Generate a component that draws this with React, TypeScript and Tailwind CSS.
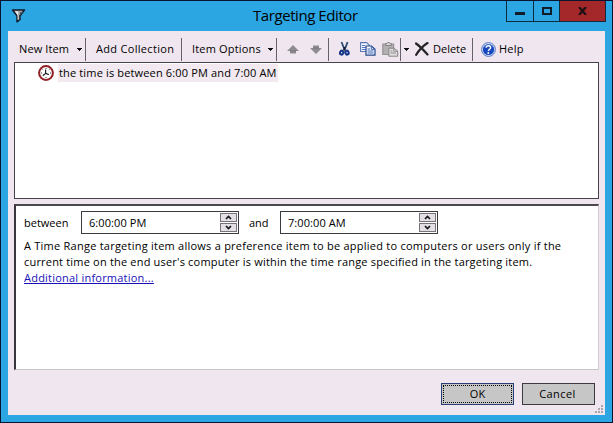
import type { ReactNode } from "react";

function Divider() {
  return <span className="h-[23px] w-px shrink-0 bg-[#66626c]" />;
}

function Caret() {
  return (
    <svg width="6" height="3" viewBox="0 0 6 3" className="shrink-0" shapeRendering="crispEdges">
      <path d="M0 0h6L3 3z" fill="#111" />
    </svg>
  );
}

function FilterIcon() {
  return (
    <svg width="16" height="14" viewBox="0 0 16 14">
      <path d="M1.5 1h12L9 6.8v3.7L6 12.8v-6z" fill="#a8a9ad" stroke="#121e2b" strokeWidth="1.5" strokeLinejoin="round" />
      <path d="M4 2.2h3l.5 8-.8.5V6.5z" fill="#e9e9e9" />
      <path d="M9 3h3L8.5 6.5z" fill="#555b63" />
    </svg>
  );
}

function ArrowIcon({ down = false }: { down?: boolean }) {
  return (
    <svg width="12" height="9" viewBox="0 0 12 9" className={down ? "shrink-0 rotate-180" : "shrink-0"}>
      <path d="M6 0l6 6H9v2.5H3V6H0z" fill="#8e8c91" />
      <path d="M3 6h6" stroke="#77757a" />
    </svg>
  );
}

function ScissorsIcon() {
  return (
    <svg width="11" height="14" viewBox="0 0 11 14" className="shrink-0">
      <path d="M2.5 0l2 5 1.6 3M8.6 0L6.7 5 4.6 8" fill="none" stroke="#254874" strokeWidth="1.7" />
      <path d="M5.5 5v3.5" stroke="#101a31" strokeWidth="2" />
      <ellipse cx="2.7" cy="10.6" rx="1.6" ry="2" fill="none" stroke="#123489" strokeWidth="2" transform="rotate(25 2.7 10.6)" />
      <ellipse cx="8" cy="10.6" rx="1.6" ry="2" fill="none" stroke="#123489" strokeWidth="2" transform="rotate(-25 8 10.6)" />
    </svg>
  );
}

function CopyIcon() {
  return (
    <svg width="16" height="14" viewBox="0 0 16 14" className="shrink-0">
      <path d="M.6.6h6l2.8 2.7v6.2H.6z" fill="#f4f7ff" stroke="#5b78b4" strokeWidth="1.1" />
      <path d="M2 3.5h3M2 5.5h4M2 7.5h4" stroke="#5379c2" />
      <path d="M6 4h5.5L15 7.2v5.9H6z" fill="#f8faff" stroke="#24468d" strokeWidth="1.2" />
      <path d="M11.3 4v3.3H15M7.5 7h2.5M7.5 9h6M7.5 11h6" fill="none" stroke="#3b62b3" />
    </svg>
  );
}

function PasteIcon() {
  return (
    <svg width="17" height="15" viewBox="0 0 17 15" className="shrink-0">
      <path d="M.8 2h10.8v10.5H.8z" fill="#b2b0b1" stroke="#949294" strokeWidth="1.2" />
      <path d="M3.5 3.5V1.7H5L5.5.6h2L8 1.7h1.5v1.8z" fill="#dedcda" stroke="#858385" />
      <path d="M6.8 6.2h5L15.7 9v5.2H6.8z" fill="#e2dfdf" stroke="#858385" />
      <path d="M11.8 6v3.2h4M8.3 9h2M8.3 11h5.8" fill="none" stroke="#918f91" />
    </svg>
  );
}

function DeleteIcon() {
  return (
    <svg width="14" height="14" viewBox="0 0 14 14" className="shrink-0">
      <path d="M1 1.5c3 2 7.5 6.5 11.5 11M12.5 1C8.5 3.5 4 8 1.2 12.8" fill="none" stroke="#242326" strokeWidth="2.2" strokeLinecap="round" />
    </svg>
  );
}

function HelpIcon() {
  return (
    <svg width="15" height="15" viewBox="0 0 15 15" className="shrink-0">
      <circle cx="7.5" cy="7.5" r="6.9" fill="#d8e3f8" stroke="#5375bd" />
      <circle cx="7.5" cy="7.5" r="5.6" fill="#1646bd" />
      <path d="M3.3 5C5 2.2 9.2 1.8 11.5 4.4" fill="none" stroke="#5a85dd" />
      <path d="M5.2 5.8c.2-2.8 4.6-2.5 4.4-.1C9.5 7.3 7.6 7.2 7.4 9" fill="none" stroke="#fff" strokeWidth="1.5" />
      <circle cx="7.3" cy="11" r=".95" fill="#fff" />
    </svg>
  );
}

function ClockIcon() {
  return (
    <svg width="16" height="16" viewBox="0 0 16 16" className="shrink-0">
      <circle cx="8" cy="8" r="6.9" fill="#fff" stroke="#8f1f24" strokeWidth="2" />
      <path d="M8 3v1M8 12v1M3 8h1M12 8h1M4.5 4.5l.6.6M11.5 4.5l-.6.6" stroke="#333" />
      <path d="M7.6 4.5v4l-2.8 2.3M7.6 8.3l3.2 1.3" fill="none" stroke="#202020" strokeWidth="1.2" />
    </svg>
  );
}

function SpinButton({ down = false }: { down?: boolean }) {
  return (
    <span className="flex h-[9px] w-[17px] items-center justify-center border border-[#77737b] bg-[#e3dfe4]">
      <svg width="7" height="5" viewBox="0 0 7 5" className={down ? "rotate-180" : ""}>
        <path d="M1 4l2.5-2.5L6 4" fill="none" stroke="#151515" strokeWidth="1.7" />
      </svg>
    </span>
  );
}

function TimeField({ children }: { children: ReactNode }) {
  return (
    <div className="flex h-[23px] w-[158px] shrink-0 items-center justify-between border border-[#3c3a40] bg-white pr-px pl-[7px] tracking-[0.08px]">
      {children}
      <div className="flex flex-col gap-px">
        <SpinButton />
        <SpinButton down />
      </div>
    </div>
  );
}

export default function App() {
  return (
    <div className="flex h-[423px] w-[613px] flex-col overflow-hidden border border-[#0a1430] bg-[#2ba6e3] font-['Open_Sans','Noto_Sans',sans-serif] text-[11px] leading-4 whitespace-nowrap text-black">
      <header className="flex h-[30px] shrink-0 items-start pl-[10px]">
        <div className="mt-[8px] w-[242px]"><FilterIcon /></div>
        <h1 className="mt-[4px] w-[253px] text-[15px] leading-5 tracking-[-0.43px]">Targeting Editor</h1>
        <div className="flex h-[21px] border border-t-0 border-[#112b3d]">
          <button className="flex w-[27px] items-center justify-center border-r border-[#112b3d]"><span className="mt-[5px] h-[3px] w-[10px] bg-[#101c28]" /></button>
          <button className="flex w-[26px] items-center justify-center border-r border-[#112b3d]"><span className="h-[8px] w-[10px] border-2 border-[#101c28]" /></button>
          <button className="flex w-[45px] items-center justify-center bg-[#a4272a]"><svg width="9" height="8" viewBox="0 0 9 8"><path d="M1 0l7 8M8 0L1 8" stroke="#1c1114" strokeWidth="2.2" /></svg></button>
        </div>
      </header>

      <main className="ml-[7px] flex h-[384px] w-[597px] shrink-0 flex-col bg-[#f0e6ef] pl-[6px]">
        <nav className="flex h-[31px] shrink-0 items-center pt-[5px]">
          <div className="flex w-[71px] items-center pl-[5px]"><span className="w-[57px] tracking-[0.1px]">New Item</span><Caret /></div>
          <Divider />
          <div className="w-[95px] pl-[10px] tracking-[0.31px]">Add Collection</div>
          <Divider />
          <div className="flex w-[94px] items-center pl-[10px]"><span className="w-[75px] tracking-[0.17px]">Item Options</span><Caret /></div>
          <Divider />
          <div className="flex w-[51px] items-center gap-[11px] pl-[10px]"><ArrowIcon /><ArrowIcon down /></div>
          <Divider />
          <div className="flex w-[71px] items-center pl-[10px]"><ScissorsIcon /><span className="w-[10px]" /><CopyIcon /><span className="w-[6px]" /><PasteIcon /></div>
          <Divider />
          <div className="flex w-[71px] items-center pl-[2px]"><Caret /><span className="w-[6px]" /><DeleteIcon /><span className="pl-[4px]">Delete</span></div>
          <Divider />
          <div className="flex items-center gap-[3px] pl-[8px]"><HelpIcon /><span className="tracking-[0.2px]">Help</span></div>
        </nav>

        <section className="h-[137px] w-[585px] shrink-0 border border-[#454249] bg-white pl-[23px]">
          <div className="flex h-[20px] items-center">
            <ClockIcon />
            <span className="ml-[4px] h-[18px] w-[220px] bg-[#f2eaf0] pl-px leading-[18px] tracking-[0.15px]">the time is between 6:00 PM and 7:00 AM</span>
          </div>
        </section>

        <section className="mt-[5px] h-[166px] w-[585px] shrink-0 border-t-2 border-r border-b border-l-2 border-t-[#4b484e] border-r-[#d0cdd1] border-b-[#c7c5c8] border-l-[#39373c] bg-white pt-[5px] pl-[8px]">
          <div className="flex items-center">
            <span className="w-[57px]">between</span>
            <TimeField>6:00:00 PM</TimeField>
            <span className="w-[41px] pl-[10px]">and</span>
            <TimeField>7:00:00 AM</TimeField>
          </div>
          <p className="mt-[4px]"><span className="tracking-[0.24px]">A Time Range targeting item allows a preference item to be applied to computers or users only if the</span><br /><span className="tracking-[0.19px]">current time on the end user's computer is within the time range specified in the targeting item.</span></p>
          <a className="tracking-[0.22px] text-[#1712b7] underline">Additional information...</a>
        </section>

        <footer className="flex flex-1 items-start pt-[13px] pl-[427px]">
          <button className="h-[22px] w-[73px] shrink-0 border border-[#273f76] bg-[#c6c6c6] p-px"><span className="flex h-full items-center justify-center border border-dotted border-black">OK</span></button>
          <button className="ml-[8px] h-[22px] w-[73px] shrink-0 border border-[#3d3b40] bg-[#c6c6c6] pr-[2px] tracking-[0.4px]">Cancel</button>
          <svg width="9" height="9" viewBox="0 0 9 9" className="mt-[22px] shrink-0"><path d="M6 0h2v2H6zM3 3h2v2H3zM6 3h2v2H6zM0 6h2v2H0zM3 6h2v2H3zM6 6h2v2H6z" fill="#aaa5ad" /></svg>
        </footer>
      </main>
    </div>
  );
}
